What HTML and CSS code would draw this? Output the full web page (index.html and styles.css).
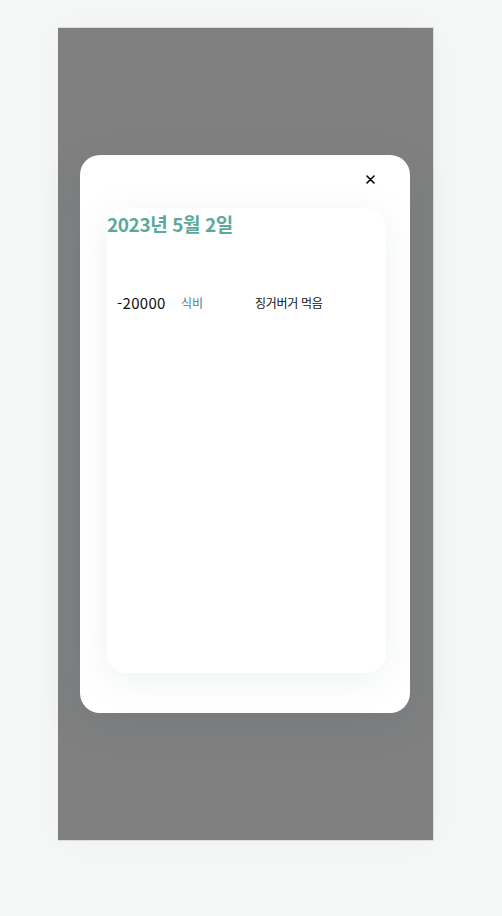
FILE: index.html
```html
<!DOCTYPE html>
<html lang="ko">
<head>
<meta charset="utf-8">
<link rel="stylesheet" href="styles.css">
</head>
<body>
<div class="frame">
  <div class="overlay">
    <div class="modal">
      <div class="modal-head">
        <button class="close" aria-label="닫기">
          <svg width="9" height="9" viewBox="0 0 9 9"><path d="M1 1L8 8M8 1L1 8" stroke="#000" stroke-width="1.6" stroke-linecap="round"/></svg>
        </button>
      </div>
      <div class="card">
        <h2 class="title">2023년 5월 2일</h2>
        <ul class="list">
          <li class="item">
            <span class="amount">-20000</span>
            <span class="category">식비</span>
            <span class="memo">징거버거 먹음</span>
          </li>
        </ul>
      </div>
    </div>
  </div>
</div>
</body>
</html>
```
FILE: styles.css
```css
html, body {
  margin: 0;
  padding: 0;
}
body {
  background: #f6f8f8;
  font-family: "Noto Sans CJK KR", "Noto Sans", sans-serif;
  width: 502px;
  height: 916px;
  overflow: hidden;
}
.frame {
  margin: 27px 0 0 58px;
  width: 375px;
  height: 812px;
  border: 1px solid #dcdede;
  border-left: none;
  background: #fff;
  box-shadow: 0 0 40px rgba(0, 0, 0, 0.04);
}
.overlay {
  width: 100%;
  height: 100%;
  background: #808080;
  display: flex;
  align-items: center;
  justify-content: center;
}
.modal {
  width: 330px;
  height: 558px;
  margin-right: 1px;
  background: #fff;
  border-radius: 20px;
  box-sizing: border-box;
  padding: 0 24px 40px 27px;
  display: flex;
  flex-direction: column;
  box-shadow: 0 10px 40px rgba(40, 70, 110, 0.12);
}
.modal-head {
  height: 53px;
  display: flex;
  justify-content: flex-end;
  align-items: flex-start;
}
.close {
  margin: 20px 11px 0 0;
  padding: 0;
  border: none;
  background: none;
  width: 9px;
  height: 9px;
  display: flex;
}
.card {
  flex: 1;
  background: #fff;
  border-radius: 20px;
  box-shadow: 0 6px 36px rgba(100, 130, 140, 0.11);
}
.title {
  margin: 0;
  padding-top: 3px;
  font-size: 19px;
  font-weight: 700;
  color: #5aa99a;
  line-height: 26px;
  letter-spacing: -0.4px;
}
.list {
  list-style: none;
  margin: 0;
  padding: 53px 0 0 10px;
}
.item {
  display: flex;
  align-items: center;
  height: 24px;
}
.amount {
  width: 64px;
  font-size: 15px;
  color: #111;
  letter-spacing: 0.3px;
}
.category {
  width: 74px;
  font-size: 12px;
  color: #4a7c9c;
}
.memo {
  font-size: 12px;
  color: #111;
  letter-spacing: -0.3px;
}
```
